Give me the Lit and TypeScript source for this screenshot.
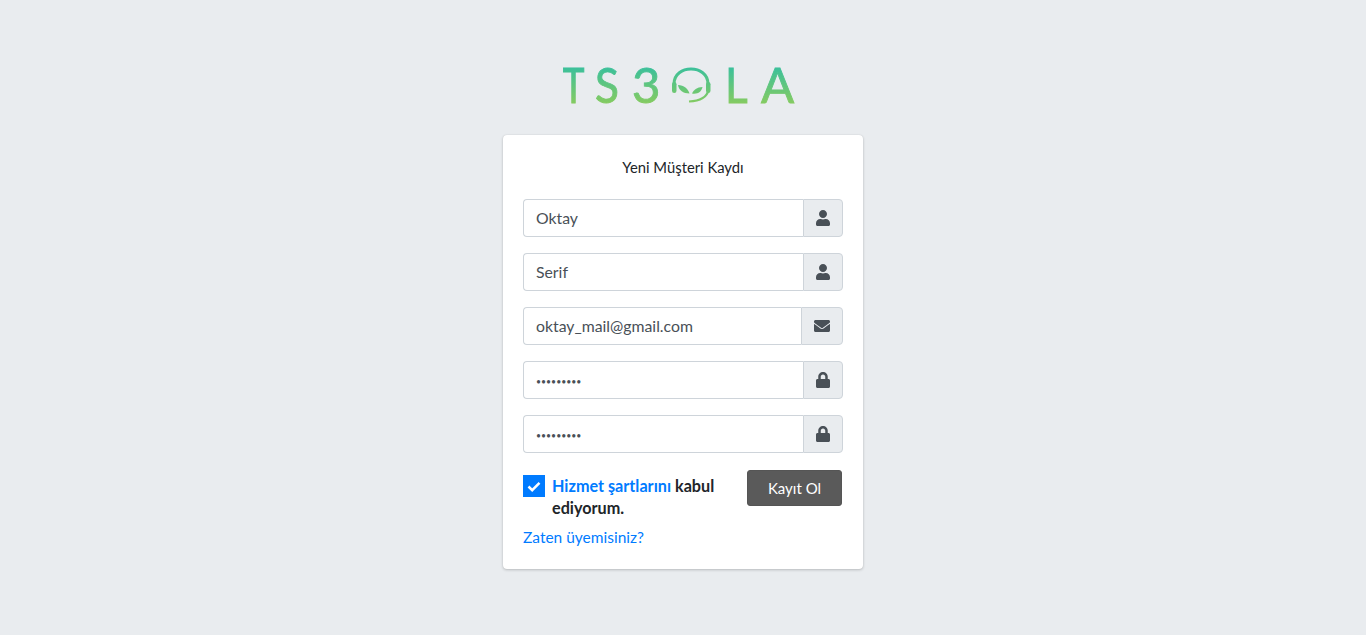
import { LitElement, html, css, svg } from "lit";
import { customElement } from "lit/decorators.js";

const userIcon = svg`<svg class="ico" width="14" height="16" viewBox="0 0 448 512"><path fill="currentColor" d="M224 256c70.700 0 128-57.300 128-128S294.700 0 224 0 96 57.300 96 128s57.300 128 128 128zm89.600 32h-16.700c-22.200 10.200-46.900 16-72.900 16s-50.600-5.800-72.900-16h-16.700C60.200 288 0 348.200 0 422.400V464c0 26.500 21.500 48 48 48h352c26.500 0 48-21.500 48-48v-41.600c0-74.200-60.200-134.400-134.400-134.400z"/></svg>`;
const mailIcon = svg`<svg class="ico" width="16" height="16" viewBox="0 0 512 512"><path fill="currentColor" d="M502.300 190.800c3.900-3.100 9.700-.2 9.700 4.700V400c0 26.500-21.500 48-48 48H48c-26.500 0-48-21.500-48-48V195.600c0-5 5.700-7.800 9.700-4.700 22.400 17.400 52.100 39.500 154.100 113.600 21.100 15.400 56.700 47.800 92.200 47.600 35.700.3 72-32.800 92.300-47.600 102-74.100 131.600-96.300 154-113.700zM256 320c23.200.4 56.600-29.200 73.400-41.400 132.700-96.300 142.800-104.700 173.400-128.700 5.800-4.500 9.200-11.500 9.200-18.900v-19c0-26.500-21.500-48-48-48H48C21.500 64 0 85.500 0 112v19c0 7.400 3.400 14.300 9.200 18.900 30.600 23.900 40.700 32.400 173.400 128.700 16.800 12.200 50.200 41.800 73.400 41.400z"/></svg>`;
const lockIcon = svg`<svg class="ico" width="14" height="16" viewBox="0 0 448 512"><path fill="currentColor" d="M400 224h-24v-72C376 68.200 307.800 0 224 0S72 68.200 72 152v72H48c-26.500 0-48 21.500-48 48v192c0 26.500 21.500 48 48 48h352c26.500 0 48-21.500 48-48V272c0-26.500-21.500-48-48-48zm-104 0H152v-72c0-39.700 32.300-72 72-72s72 32.300 72 72v72z"/></svg>`;

const fields = [
  { secret: false, value: "Oktay", icon: userIcon },
  { secret: false, value: "Serif", icon: userIcon },
  { secret: false, value: "oktay_mail@gmail.com", icon: mailIcon },
  { secret: true, value: "•••••••••", icon: lockIcon },
  { secret: true, value: "•••••••••", icon: lockIcon },
];

@customElement("app-root")
export class AppRoot extends LitElement {
  static styles = css`
    :host {
      display: block;
      min-height: 635px;
      background: #e9ecef;
      font-family: "Lato", "Noto Sans", sans-serif;
      font-size: 15.500px;
      color: #212529;
    }
    .page {
      display: flex;
      flex-direction: column;
      align-items: center;
      padding-top: 50px;
    }
    .logo {
      display: block;
      margin-bottom: 15px;
      filter: blur(0.5px);
    }
    .logo text {
      font-family: "Lato", sans-serif;
      font-size: 49px;
      fill: url(#gt);
      stroke: url(#gt);
      stroke-width: 0.9px;
    }
    .card {
      box-sizing: border-box;
      width: 360px;
      height: 434px;
      background: #fff;
      border-radius: 4px;
      box-shadow: 0 0 1px rgba(0, 0, 0, 0.125), 0 1px 3px rgba(0, 0, 0, 0.2);
      padding: 20px;
    }
    .title {
      margin: 0 0 20px;
      height: 24px;
      line-height: 24px;
      text-align: center;
      font-size: 14.800px;
    }
    .group {
      display: flex;
      height: 38px;
      margin-bottom: 16px;
    }
    .input {
      flex: 1;
      min-width: 0;
      box-sizing: border-box;
      border: 1px solid #ced4da;
      border-right: 0;
      border-radius: 4px 0 0 4px;
      padding: 0 12px 2px;
      display: flex;
      align-items: center;
      color: #495057;
      background: #fff;
      font-size: 15.800px;
    }
    .secret {
      font-size: 8.700px;
      padding: 3px 12px 0;
    }
    .addon {
      box-sizing: border-box;
      flex: none;
      display: flex;
      align-items: center;
      justify-content: center;
      padding: 0 12px;
      background: #e9ecef;
      border: 1px solid #ced4da;
      border-radius: 0 4px 4px 0;
      color: #495057;
    }
    .ico {
      display: block;
    }
    .terms {
      display: flex;
      justify-content: space-between;
      align-items: flex-start;
      margin-top: 17px;
    }
    .check-wrap {
      display: flex;
      gap: 7px;
      width: 204px;
      padding-top: 5px;
    }
    .box {
      flex: none;
      width: 22px;
      height: 22px;
      background: #007bff;
      display: flex;
      align-items: center;
      justify-content: center;
    }
    .label {
      font-weight: 700;
      font-size: 16.200px;
      line-height: 22px;
      color: #212529;
    }
    a {
      color: #007bff;
      text-decoration: none;
    }
    .btn {
      box-sizing: border-box;
      width: 95px;
      height: 36px;
      margin-right: 1px;
      background: #5a5a5a;
      border: 1px solid #555;
      border-radius: 3px;
      color: #fff;
      font-size: 15px;
      display: flex;
      align-items: center;
      justify-content: center;
    }
    .login {
      display: block;
      margin-top: 6px;
      line-height: 24px;
    }
  `;

  render() {
    return html`
      <div class="page">
        <svg class="logo" width="240" height="70" viewBox="0 50 240 70">
          <defs>
            <linearGradient id="gt" gradientUnits="userSpaceOnUse" x1="0" y1="-35" x2="0" y2="1">
              <stop offset="0" stop-color="#3cc09a" />
              <stop offset="1" stop-color="#86cb60" />
            </linearGradient>
            <linearGradient id="gv" gradientUnits="userSpaceOnUse" x1="0" y1="68" x2="0" y2="104">
              <stop offset="0" stop-color="#3cc09a" />
              <stop offset="1" stop-color="#86cb60" />
            </linearGradient>
          </defs>
          <text transform="translate(-0.500 103) scale(0.76 1)">T</text>
          <text transform="translate(32 103) scale(0.9 1)">S</text>
          <text transform="translate(69 103)">3</text>
          <g fill="none" stroke="url(#gv)">
            <path d="M111 84 C111 64 145 64 145 84" stroke-width="3" />
            <path d="M145.500 90 C144 97 137 101 126 101.500" stroke-width="2.200" />
          </g>
          <g fill="url(#gv)">
            <rect x="109" y="82" width="4.500" height="11" rx="2.200" />
            <rect x="143" y="82" width="4.500" height="11" rx="2.200" />
            <path d="M115 85 C121 85 125 89 126.500 93.500 C120 93.500 116 90.500 115 85Z" />
            <path d="M139.500 87 C134 87 130.500 90 129 93.500 C134.500 94.500 138.500 92 139.500 87Z" />
          </g>
          <text transform="translate(162 103) scale(0.9 1)">L</text>
          <text transform="translate(198 103)">A</text>
        </svg>
        <div class="card">
          <p class="title">Yeni Müşteri Kaydı</p>
          ${fields.map(
            (f) => html`<div class="group">
              <div class="input ${f.secret ? "secret" : ""}">${f.value}</div>
              <div class="addon">${f.icon}</div>
            </div>`
          )}
          <div class="terms">
            <div class="check-wrap">
              <span class="box">
                <svg width="14" height="14" viewBox="0 0 14 14">
                  <path d="M1.500 7.500 L5.200 11.200 L12.500 3.800" fill="none" stroke="#fff" stroke-width="2.500" />
                </svg>
              </span>
              <span class="label"><a href="#">Hizmet şartlarını</a> <span>kabul</span> <span>ediyorum.</span></span>
            </div>
            <div class="btn">Kayıt Ol</div>
          </div>
          <a class="login" href="#">Zaten üyemisiniz?</a>
        </div>
      </div>
    `;
  }
}
